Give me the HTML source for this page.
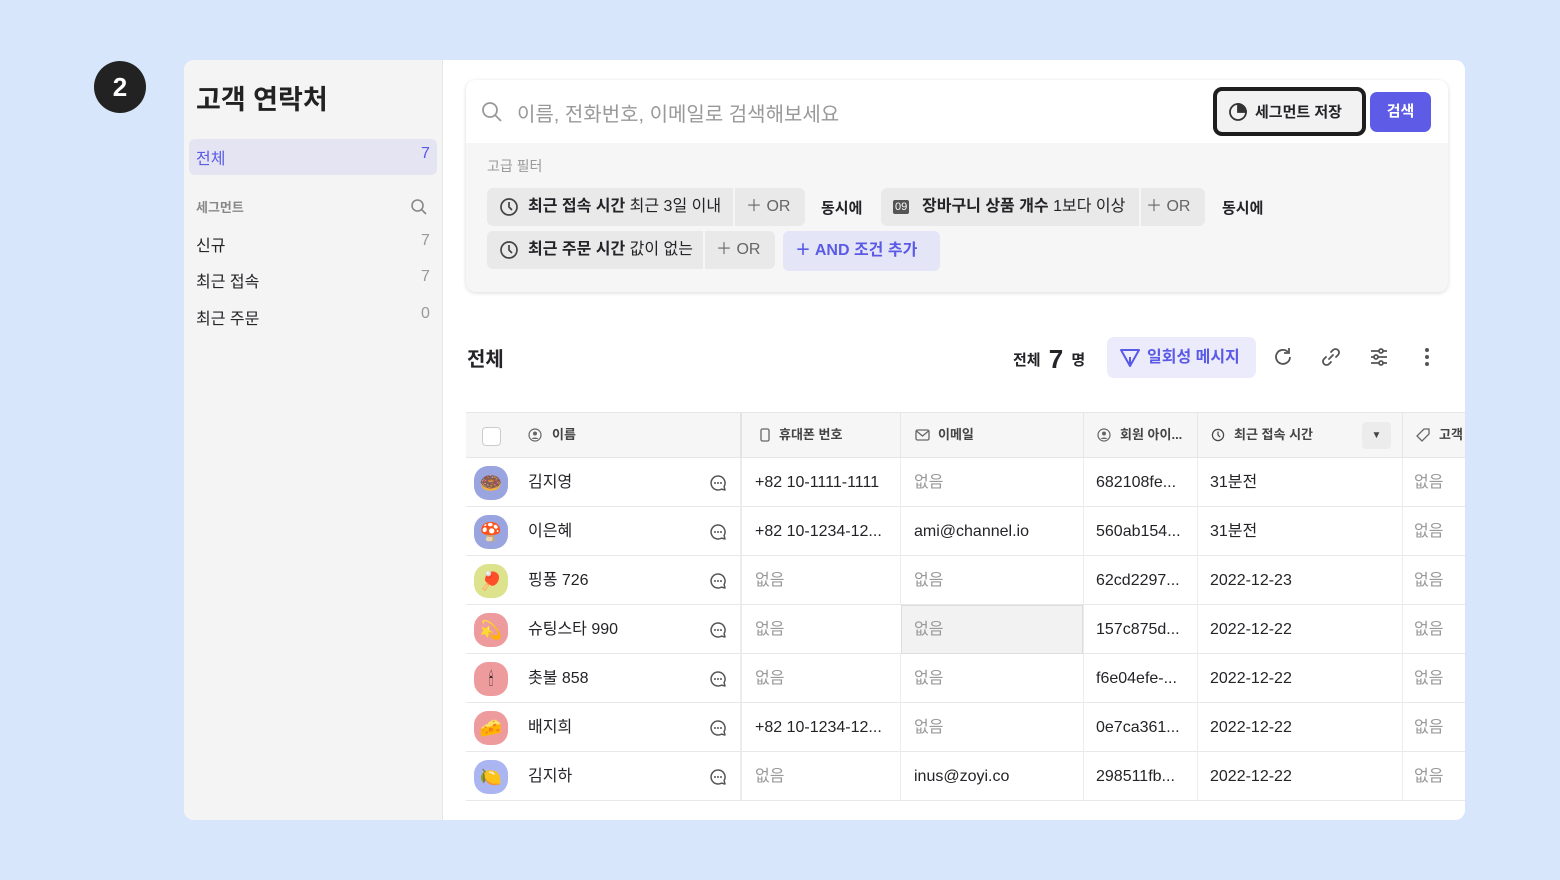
<!DOCTYPE html><html><head><meta charset="utf-8"><style>
*{box-sizing:border-box;margin:0;padding:0}
body{width:1560px;height:880px;background:#d8e6fc;font-family:"Liberation Sans","Noto Sans CJK KR",sans-serif;position:relative;overflow:hidden;color:#242428}
.a{position:absolute}
.badge{left:94px;top:61px;width:52px;height:52px;border-radius:50%;background:#222;color:#fff;font-size:26px;font-weight:700;text-align:center;line-height:52px}
.card{left:184px;top:60px;width:1281px;height:760px;background:#fff;border-radius:10px;overflow:hidden}
.side{left:0;top:0;width:259px;height:760px;background:#f4f4f4;border-right:1px solid #e6e6e6}
.t{white-space:nowrap}
.chip{position:absolute;height:38px;background:#e9e9e9;border-radius:6px;font-size:16px;line-height:38px;white-space:nowrap}
.chip b{font-weight:700}
.chip .s{position:absolute;top:0;width:2px;height:38px;background:#f6f6f6}
.chip .o{position:absolute;top:0;color:#666}
.chip .m{position:absolute;top:0;left:12px}
.g{color:#999}
.row{position:absolute;left:282px;width:1000px;height:49px;border-bottom:1px solid #e8e8e8;font-size:16px}
.row span{position:absolute;top:0;line-height:50px;white-space:nowrap}
.av{position:absolute;left:8px;top:8px;width:34px;height:34px;border-radius:14px;text-align:center;line-height:34px;font-size:18px}
.vl{position:absolute;top:0;width:1px;height:49px;background:#ececec}
.hd{position:absolute;top:352px;left:282px;width:1000px;height:46px;background:#f6f6f6;border-top:1px solid #e6e6e6;border-bottom:1px solid #e6e6e6;font-size:13px;font-weight:700;color:#444}
.hd span{position:absolute;line-height:44px;white-space:nowrap}
.hd svg{position:absolute;top:15px}
.cb{position:absolute;left:243px;top:16px}
</style></head><body>
<svg width="0" height="0" style="position:absolute"><defs>
<symbol id="chat" viewBox="0 0 18 18"><path d="M9 2a7 7 0 1 0 3.5 13.1L16 16l-.9-3.5A7 7 0 0 0 9 2z" fill="none" stroke="#555" stroke-width="1.5" stroke-linejoin="round"/><circle cx="6" cy="9" r="1" fill="#555"/><circle cx="9" cy="9" r="1" fill="#555"/><circle cx="12" cy="9" r="1" fill="#555"/></symbol>
<symbol id="clk" viewBox="0 0 20 20"><circle cx="10" cy="10" r="8" fill="none" stroke="#444" stroke-width="1.7"/><path d="M10 5v5l3 3" fill="none" stroke="#444" stroke-width="1.7"/></symbol>
<symbol id="usr" viewBox="0 0 14 14"><circle cx="7" cy="7" r="6" fill="none" stroke="#666" stroke-width="1.2"/><circle cx="7" cy="5.5" r="2" fill="#666"/><path d="M3.5 11a4 3 0 0 1 7 0" fill="#666"/></symbol>
</defs></svg>
<div class="a badge">2</div>
<div class="a card">
 <div class="a side">
  <div class="a t" style="left:12px;top:18px;font-size:27px;font-weight:700;color:#222">고객 연락처</div>
  <div class="a" style="left:5px;top:79px;width:248px;height:36px;background:#e4e4f2;border-radius:6px"></div>
  <div class="a t" style="left:12px;top:85px;font-size:16px;color:#5a5ae6">전체</div>
  <div class="a t" style="left:237px;top:85px;font-size:16px;color:#5a5ae6">7</div>
  <div class="a t" style="left:12px;top:137px;font-size:13px;color:#888;font-weight:700">세그먼트</div>
  <svg class="a" style="left:226px;top:138px" width="18" height="18" viewBox="0 0 18 18" fill="none" stroke="#888" stroke-width="1.6"><circle cx="7.5" cy="7.5" r="5.5"/><path d="M11.5 11.5l4.5 4.5"/></svg>
  <div class="a t" style="left:12px;top:172px;font-size:16px">신규</div><div class="a t g" style="left:237px;top:172px;font-size:16px">7</div>
  <div class="a t" style="left:12px;top:208px;font-size:16px">최근 접속</div><div class="a t g" style="left:237px;top:208px;font-size:16px">7</div>
  <div class="a t" style="left:12px;top:245px;font-size:16px">최근 주문</div><div class="a t g" style="left:237px;top:245px;font-size:16px">0</div>
 </div>
 <div class="a" style="left:282px;top:20px;width:982px;height:212px;border-radius:10px;background:#f6f6f6;box-shadow:0 1px 4px rgba(0,0,0,.15);overflow:hidden">
  <div class="a" style="left:0;top:0;width:982px;height:63px;background:#fff"></div>
  <svg class="a" style="left:15px;top:21px" width="22" height="22" viewBox="0 0 22 22" fill="none" stroke="#999" stroke-width="1.8"><circle cx="9" cy="9" r="7"/><path d="M14 14l6 6"/></svg>
  <div class="a t" style="left:51px;top:18px;font-size:20px;color:#999">이름, 전화번호, 이메일로 검색해보세요</div>
  <div class="a" style="left:747px;top:7px;width:153px;height:49px;border:4px solid #1e1e1e;border-radius:9px;background:#f2f2f2"></div>
  <svg class="a" style="left:762px;top:22px" width="20" height="20" viewBox="0 0 20 20" fill="none" stroke="#333" stroke-width="1.8"><circle cx="10" cy="10" r="8"/><path d="M10 10L10 2A8 8 0 0 1 18 10Z" fill="#333"/></svg>
  <div class="a t" style="left:789px;top:21px;font-size:15px;font-weight:700">세그먼트 저장</div>
  <div class="a t" style="left:904px;top:12px;width:61px;height:40px;border-radius:7px;background:#5e5ce6;color:#fff;font-size:15px;font-weight:700;text-align:center;line-height:40px">검색</div>
  <div class="a t" style="left:21px;top:76px;font-size:14px;color:#999">고급 필터</div>
  <div class="chip" style="left:21px;top:108px;width:318px"><svg class="a" style="left:12px;top:9px" width="20" height="20"><use href="#clk"/></svg><span class="m" style="left:41px"><b>최근 접속 시간</b> 최근 3일 이내</span><span class="s" style="left:246px"></span><span class="o" style="left:259px">＋ OR</span></div>
  <div class="a t" style="left:355px;top:117px;font-size:15px;font-weight:700">동시에</div>
  <div class="chip" style="left:415px;top:108px;width:324px"><span class="m" style="left:12px;top:1px;font-size:11px;line-height:14px;margin-top:11px;background:#555;color:#fff;border-radius:2px;padding:0 2px">09</span><span class="m" style="left:41px"><b>장바구니 상품 개수</b> 1보다 이상</span><span class="s" style="left:258px"></span><span class="o" style="left:265px">＋ OR</span></div>
  <div class="a t" style="left:756px;top:117px;font-size:15px;font-weight:700">동시에</div>
  <div class="chip" style="left:21px;top:151px;width:288px"><svg class="a" style="left:12px;top:9px" width="20" height="20"><use href="#clk"/></svg><span class="m" style="left:41px"><b>최근 주문 시간</b> 값이 없는</span><span class="s" style="left:216px"></span><span class="o" style="left:229px">＋ OR</span></div>
  <div class="chip" style="left:317px;top:151px;height:40px;width:157px;background:#e5e5f8;color:#5a5ae6;font-weight:700;line-height:40px"><span class="m" style="left:12px">＋ AND 조건 추가</span></div>
 </div>
 <div class="a t" style="left:283px;top:283px;font-size:20px;font-weight:700">전체</div>
 <div class="a t" style="left:829px;top:284px;font-size:15px;font-weight:700">전체 <span style="font-size:26px;vertical-align:-3px;margin:0 4px">7</span> 명</div>
 <div class="a t" style="left:923px;top:277px;width:149px;height:41px;border-radius:7px;background:#ebebfb;color:#5a5ae6;font-size:16px;font-weight:700;line-height:41px;padding-left:40px">일회성 메시지</div>
 <svg class="a" style="left:935px;top:287px" width="22" height="22" viewBox="0 0 22 22" fill="none" stroke="#5a5ae6" stroke-width="2" stroke-linejoin="round"><path d="M2 3h18L11 19z M11 19V10"/></svg>
 <svg class="a" style="left:1088px;top:286px" width="22" height="22" viewBox="0 0 22 22" fill="none" stroke="#555" stroke-width="1.8"><path d="M18 11a7 7 0 1 1-2-5"/><path d="M17 2v5h-5"/></svg>
 <svg class="a" style="left:1136px;top:286px" width="22" height="22" viewBox="0 0 22 22" fill="none" stroke="#555" stroke-width="1.8" stroke-linecap="round"><path d="M9 13l4-4"/><path d="M11 6l2-2a3.5 3.5 0 0 1 5 5l-2 2"/><path d="M11 16l-2 2a3.5 3.5 0 0 1-5-5l2-2"/></svg>
 <svg class="a" style="left:1184px;top:286px" width="22" height="22" viewBox="0 0 22 22" fill="none" stroke="#555" stroke-width="1.8"><path d="M3 5h16M3 11h16M3 17h16"/><circle cx="13" cy="5" r="2" fill="#fff"/><circle cx="8" cy="11" r="2" fill="#fff"/><circle cx="13" cy="17" r="2" fill="#fff"/></svg>
 <svg class="a" style="left:1232px;top:286px" width="22" height="22" viewBox="0 0 22 22" fill="#555"><circle cx="11" cy="4" r="2"/><circle cx="11" cy="11" r="2"/><circle cx="11" cy="18" r="2"/></svg>
 <div class="hd">
  <div class="a" style="left:16px;top:14px;width:19px;height:19px;border:1.5px solid #ccc;border-radius:4px;background:#fff"></div>
  <svg style="left:62px" width="14" height="14"><use href="#usr"/></svg><span style="left:86px">이름</span>
  <div class="a" style="left:274px;top:0;width:2px;height:44px;background:#e2e2e2"></div>
  <svg style="left:292px" width="14" height="14" viewBox="0 0 14 14"><rect x="3" y="1" width="8" height="12" rx="1.5" fill="none" stroke="#666" stroke-width="1.3"/></svg><span style="left:313px">휴대폰 번호</span>
  <div class="a" style="left:434px;top:0;width:1px;height:44px;background:#e6e6e6"></div>
  <svg style="left:449px" width="15" height="14" viewBox="0 0 15 14"><rect x="1" y="2" width="13" height="10" rx="1.5" fill="none" stroke="#666" stroke-width="1.3"/><path d="M1.5 3l6 5 6-5" fill="none" stroke="#666" stroke-width="1.3"/></svg><span style="left:472px">이메일</span>
  <div class="a" style="left:617px;top:0;width:1px;height:44px;background:#e6e6e6"></div>
  <svg style="left:631px" width="14" height="14"><use href="#usr"/></svg><span style="left:654px">회원 아이...</span>
  <div class="a" style="left:731px;top:0;width:1px;height:44px;background:#e6e6e6"></div>
  <svg style="left:745px" width="14" height="14"><use href="#clk"/></svg><span style="left:768px">최근 접속 시간</span>
  <div class="a" style="left:896px;top:9px;width:29px;height:27px;background:#ececec;border-radius:4px;font-size:10px;text-align:center;line-height:27px">▼</div>
  <div class="a" style="left:936px;top:0;width:1px;height:44px;background:#e6e6e6"></div>
  <svg style="left:950px" width="14" height="14" viewBox="0 0 14 14"><path d="M8 1h5v5l-7 7-5-5z" fill="none" stroke="#666" stroke-width="1.3"/></svg><span style="left:973px">고객</span>
 </div>
 <div class="row" style="top:398px"><div class="av" style="background:#9aa4df">🍩</div><span style="left:62px">김지영</span><svg class="cb" width="18" height="18"><use href="#chat"/></svg><div class="vl" style="left:274px;width:2px"></div><span style="left:289px">+82 10-1111-1111</span><div class="vl" style="left:434px"></div><span class="g" style="left:448px">없음</span><div class="vl" style="left:617px"></div><span style="left:630px">682108fe...</span><div class="vl" style="left:731px"></div><span style="left:744px">31분전</span><div class="vl" style="left:936px"></div><span class="g" style="left:948px">없음</span></div>
 <div class="row" style="top:447px"><div class="av" style="background:#9aa4df">🍄</div><span style="left:62px">이은혜</span><svg class="cb" width="18" height="18"><use href="#chat"/></svg><div class="vl" style="left:274px;width:2px"></div><span style="left:289px">+82 10-1234-12...</span><div class="vl" style="left:434px"></div><span style="left:448px">ami@channel.io</span><div class="vl" style="left:617px"></div><span style="left:630px">560ab154...</span><div class="vl" style="left:731px"></div><span style="left:744px">31분전</span><div class="vl" style="left:936px"></div><span class="g" style="left:948px">없음</span></div>
 <div class="row" style="top:496px"><div class="av" style="background:#dce38c">🏓</div><span style="left:62px">핑퐁 726</span><svg class="cb" width="18" height="18"><use href="#chat"/></svg><div class="vl" style="left:274px;width:2px"></div><span class="g" style="left:289px">없음</span><div class="vl" style="left:434px"></div><span class="g" style="left:448px">없음</span><div class="vl" style="left:617px"></div><span style="left:630px">62cd2297...</span><div class="vl" style="left:731px"></div><span style="left:744px">2022-12-23</span><div class="vl" style="left:936px"></div><span class="g" style="left:948px">없음</span></div>
 <div class="row" style="top:545px"><div class="av" style="background:#ee9b9e">💫</div><span style="left:62px">슈팅스타 990</span><svg class="cb" width="18" height="18"><use href="#chat"/></svg><div class="vl" style="left:274px;width:2px"></div><span class="g" style="left:289px">없음</span><div class="a" style="left:435px;top:0;width:182px;height:49px;background:#f2f2f2;border:1px solid #ddd"></div><span class="g" style="left:448px">없음</span><div class="vl" style="left:617px"></div><span style="left:630px">157c875d...</span><div class="vl" style="left:731px"></div><span style="left:744px">2022-12-22</span><div class="vl" style="left:936px"></div><span class="g" style="left:948px">없음</span></div>
 <div class="row" style="top:594px"><div class="av" style="background:#ee9b9e">🕯</div><span style="left:62px">촛불 858</span><svg class="cb" width="18" height="18"><use href="#chat"/></svg><div class="vl" style="left:274px;width:2px"></div><span class="g" style="left:289px">없음</span><div class="vl" style="left:434px"></div><span class="g" style="left:448px">없음</span><div class="vl" style="left:617px"></div><span style="left:630px">f6e04efe-...</span><div class="vl" style="left:731px"></div><span style="left:744px">2022-12-22</span><div class="vl" style="left:936px"></div><span class="g" style="left:948px">없음</span></div>
 <div class="row" style="top:643px"><div class="av" style="background:#ee9b9e">🧀</div><span style="left:62px">배지희</span><svg class="cb" width="18" height="18"><use href="#chat"/></svg><div class="vl" style="left:274px;width:2px"></div><span style="left:289px">+82 10-1234-12...</span><div class="vl" style="left:434px"></div><span class="g" style="left:448px">없음</span><div class="vl" style="left:617px"></div><span style="left:630px">0e7ca361...</span><div class="vl" style="left:731px"></div><span style="left:744px">2022-12-22</span><div class="vl" style="left:936px"></div><span class="g" style="left:948px">없음</span></div>
 <div class="row" style="top:692px"><div class="av" style="background:#aab5f2">🍋</div><span style="left:62px">김지하</span><svg class="cb" width="18" height="18"><use href="#chat"/></svg><div class="vl" style="left:274px;width:2px"></div><span class="g" style="left:289px">없음</span><div class="vl" style="left:434px"></div><span style="left:448px">inus@zoyi.co</span><div class="vl" style="left:617px"></div><span style="left:630px">298511fb...</span><div class="vl" style="left:731px"></div><span style="left:744px">2022-12-22</span><div class="vl" style="left:936px"></div><span class="g" style="left:948px">없음</span></div>
</div>
</body></html>
